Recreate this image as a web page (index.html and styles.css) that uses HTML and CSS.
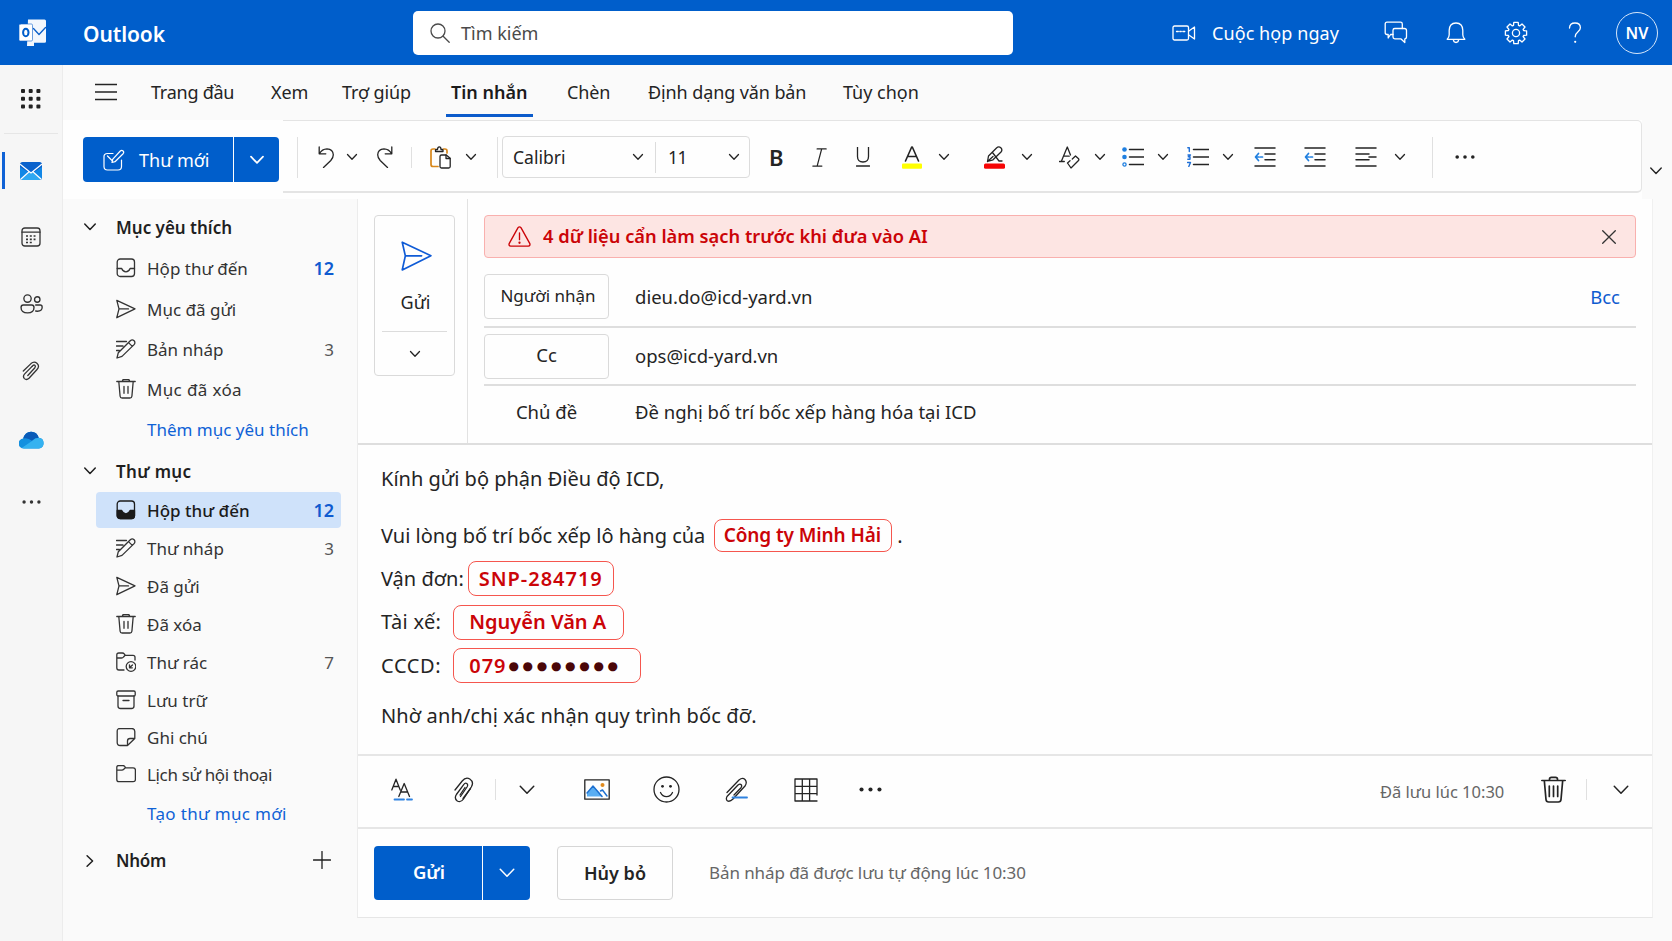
FILE: index.html
```html
<!DOCTYPE html>
<html lang="vi">
<head>
<meta charset="utf-8">
<title>Outlook</title>
<link rel="stylesheet" href="styles.css">
</head>
<body>
<svg class="sprite" aria-hidden="true">
  <symbol id="chev" viewBox="0 0 12 12"><path d="M1.5 3.500 6 8.200l4.500-4.700"/></symbol>
  <symbol id="dots" viewBox="0 0 20 6"><g fill="currentColor" stroke="none"><circle cx="2.200" cy="3" r="1.800"/><circle cx="10" cy="3" r="1.800"/><circle cx="17.800" cy="3" r="1.800"/></g></symbol>
  <symbol id="send" viewBox="0 0 20 20"><path d="M.8 1.300 19 9.800.8 18.700 3 9.900zM3 9.900h9.500"/></symbol>
  <symbol id="draft" viewBox="0 0 20 20"><path d="M.5 2.500h10M.5 7h6.500M.5 11.500h3M1 19l1.300-5.300L14.300 1.800a2.600 2.600 0 0 1 3.800 3.800L6 17.400zM12.500 3.600l3.800 3.800"/></symbol>
  <symbol id="trash" viewBox="0 0 20 20"><path d="M.8 2.500h18.400M6.500 2.500V1.800Q6.500.5 8 .5h4q1.500 0 1.500 1.300v.7M2.800 2.500l1.300 14.700q.2 1.800 2 1.800h7.800q1.800 0 2-1.800L17.200 2.500M8 7.500v6.800M12 7.500v6.800"/></symbol>
  <symbol id="inbox" viewBox="0 0 20 20"><rect x="1.200" y="1" width="17.300" height="17.500" rx="3"/><path d="M1.200 10.500h4.500q1.300 3.300 4.200 3.300t4.200-3.300h4.400"/></symbol>
  <symbol id="inbox-fill" viewBox="0 0 20 20"><rect x="1.200" y="1" width="17.300" height="17.500" rx="3"/><path fill="currentColor" d="M1.200 10.500h4.500q1.300 3.300 4.200 3.300t4.200-3.300h4.400v5q0 3-3 3H4.200q-3 0-3-3z"/></symbol>
</svg>

<header class="topbar">
  <svg class="logo" viewBox="0 0 27 27"><path fill="#fff" d="M9 .5h16.500q1.500 0 1.500 1.500v20.500q0 1.200-1.500 1.200H15V27H8z" opacity=".95"/><path d="M14.500 9.500l5.500 6 6.500-7" fill="none" stroke="#0a5fc9" stroke-width="1.300"/><rect x="0" y="5" width="13.500" height="17" rx="1.200" fill="#fff" stroke="#0a5fc9" stroke-width=".6"/><ellipse cx="6.800" cy="13.500" rx="2.700" ry="3.700" fill="none" stroke="#005ecb" stroke-width="2"/></svg>
  <span class="brand">Outlook</span>
  <div class="search">
    <svg class="i20" viewBox="0 0 20 20"><circle cx="8" cy="8" r="7"/><path d="m13.200 13.200 6 6"/></svg>
    <span>Tìm kiếm</span>
  </div>
  <div class="top-actions">
    <svg class="meet" viewBox="0 0 24 16"><rect x="1" y="1" width="15.500" height="14" rx="1.500"/><path d="M16.500 6.200 22.500 2v12l-6-4.200M4.500 6.500h1.800M7.800 6.500h1.500M10.800 6.500h2"/></svg>
    <span class="meet-label">Cuộc họp ngay</span>
    <svg class="chat" viewBox="0 0 24 23"><path d="M9 13.500H6.500L4.200 17v-3.500H3q-1.800 0-1.800-1.800V3q0-1.800 1.800-1.800h13.500q1.800 0 1.800 1.800v4.500"/><path d="M10.800 7.500h9.500q2.200 0 2.200 2v6.300q0 2-1.700 2V21.500l-4-3.700h-6q-1.800 0-1.800-1.800V9.300q0-1.800 1.800-1.800z"/></svg>
    <svg class="bell" viewBox="0 0 20 22"><path d="M1.200 17.300q2-2 2-4.500V8.300Q3.200 1 10 1t6.800 7.300v4.500q0 2.500 2 4.500zM7.300 17.500q.3 3 2.700 3t2.700-3"/></svg>
    <svg class="gear" viewBox="0 0 24 24"><path d="M9.800 1.400 14.200 1.400 14.500 4.400 15.600 4.900 18 3 21 6 19.100 8.400 19.600 9.500 22.600 9.800V14.200L19.600 14.500 19.100 15.600 21 18 18 21 15.600 19.100 14.500 19.600 14.200 22.600H9.800L9.500 19.600 8.400 19.100 6 21 3 18 4.900 15.600 4.400 14.500 1.400 14.200V9.800L4.400 9.500 4.900 8.400 3 6 6 3 8.400 4.900 9.500 4.400z"/><circle cx="12" cy="12" r="3.600"/></svg>
    <svg class="help" viewBox="0 0 14 22"><path d="M1.500 6Q1.700 1 7 1t5.400 4.800Q12.400 8 9.800 10 7.200 12 7.200 14.800"/><circle cx="7.200" cy="19.800" r="1.100" fill="currentColor" stroke="none"/></svg>
    <span class="avatar">NV</span>
  </div>
</header>

<div class="app">
  <nav class="rail">
    <svg class="waffle" viewBox="0 0 20 20"><g fill="#222" stroke="none"><rect x="0" y="0" width="4" height="4" rx="1"/><rect x="7.700" y="0" width="4" height="4" rx="1"/><rect x="15.400" y="0" width="4" height="4" rx="1"/><rect x="0" y="7.700" width="4" height="4" rx="1"/><rect x="7.700" y="7.700" width="4" height="4" rx="1"/><rect x="15.400" y="7.700" width="4" height="4" rx="1"/><rect x="0" y="15.400" width="4" height="4" rx="1"/><rect x="7.700" y="15.400" width="4" height="4" rx="1"/><rect x="15.400" y="15.400" width="4" height="4" rx="1"/></g></svg>
    <div class="rail-line"></div>
    <div class="rail-mail">
      <svg class="mail" viewBox="0 0 22 18"><rect width="22" height="18" rx="2.500" fill="#0a62cc"/><path d="M0 5l8 5-7 7.500Q0 17 0 15.500z" fill="#1187e6"/><path d="M22 5l-8 5 7 7.500q1-.5 1-2z" fill="#1187e6"/><path d="M1 17.300 9 10h4l8 7.300q-.5.700-1.500.7h-17q-1 0-1.500-.7z" fill="#2fa8f2"/><path d="M.5 2.500 11 11 21.500 2.500M1 17l7.800-7M21 17l-7.800-7" fill="none" stroke="#fff" stroke-width="1.200"/></svg>
    </div>
    <svg class="cal" viewBox="0 0 20 20"><rect x="1" y="1" width="18" height="18" rx="2.800"/><path d="M1 5.200h18"/><path stroke-linecap="butt" stroke-dasharray="2 1.800" stroke-width="1.700" d="M5 9h9.500M5 12.300h9.500M5 15.500h6"/></svg>
    <svg class="people" viewBox="0 0 22 19"><circle cx="7.200" cy="4.300" r="3.500"/><circle cx="16.500" cy="5.200" r="2.600"/><path d="M3.200 10.500h8q2.200 0 2.200 2.300 0 5.200-6.200 5.200T1 12.800q0-2.300 2.200-2.300zM15 10.500h4.300q1.900 0 1.900 2 0 4-4.700 3.900l-1.500-.2"/></svg>
    <svg class="clip" viewBox="0 0 18 20"><path d="M1.300 10 9 2.600q3-2.700 5.900-.4 3.300 3-.1 6.500L7 17.300q-2.500 2.300-4.600.3-2-2.300.3-4.700l7.400-7.500"/><path d="M5.800 14.500 12.700 7q1.300-1.800.2-2.700-1.300-.9-2.800 1"/></svg>
    <svg class="cloud" viewBox="0 0 25 18"><path d="M5 17.500a5 5 0 0 1-.8-10Q6 1 12 .8t7.800 6a5.400 5.400 0 0 1 .2 10.700z" fill="#1490df"/><path d="M4.200 7.500Q6 1 12 .8t7.800 6Q16 6.800 13 9.800 9 6.500 4.200 7.500z" fill="#0a5bb8"/><path d="M3 16.800 13 10q3-3.200 6.800-3.200a5.400 5.400 0 0 1 .2 10.700H5z" fill="#35b2f0"/></svg>
    <svg class="rail-dots"><use href="#dots"/></svg>
  </nav>

  <div class="main">
    <nav class="tabs">
      <svg class="burger" viewBox="0 0 22 18"><path d="M0 1.500h22M0 9h22M0 16.500h22"/></svg>
      <a class="tab t1">Trang đầu</a>
      <a class="tab t2">Xem</a>
      <a class="tab t3">Trợ giúp</a>
      <a class="tab t4 on">Tin nhắn</a>
      <a class="tab t5">Chèn</a>
      <a class="tab t6">Định dạng văn bản</a>
      <a class="tab t7">Tùy chọn</a>
    </nav>

    <div class="ribbon">
      <div class="new-mail">
        <span class="new-main">
          <svg class="compose-ico" viewBox="0 0 22 22"><path d="M10 4.500H4.500Q1 4.500 1 7.500v10Q1 21 4.500 21H15q3.500 0 3.500-3.500V11"/><path d="m9 13.500.8-3.300L17.300 2q1.400-1.300 2.800 0 1.200 1.300 0 2.700L12 12.700zM4.500 7l5 5"/></svg>
          <span>Thư mới</span>
        </span>
        <span class="new-drop"><svg class="c16"><use href="#chev"/></svg></span>
      </div>
      <div class="tools">
        <i class="vsep s1"></i>
        <svg class="undo" viewBox="0 0 17 22"><path d="M1.200 1v6.800h6.600M1.500 7.500Q4 3 9 2.800q6 .2 6.300 6 0 3-2.500 5.700L5.500 21.500"/></svg>
        <svg class="c12 m11"><use href="#chev"/></svg>
        <svg class="redo" viewBox="0 0 17 22"><path d="M15.800 1v6.800H9.200M15.500 7.500Q13 3 8 2.800q-6 .2-6.300 6 0 3 2.500 5.700l7.300 7"/></svg>
        <i class="vsep short"></i>
        <svg class="paste" viewBox="0 0 21 23"><path stroke="#d8871a" stroke-width="1.700" d="M5 3H3Q1 3 1 5v13.500q0 2 2 2h5M13.500 3h1.500q2 0 2 2v2"/><path d="M5.500 5.500V4.300q0-.8.8-.8h1.200Q7.700.8 9.300.8T11 3.500h1.200q.8 0 .8.800v1.200z"/><path fill="#fff" d="M11.500 9h4.700l4 3.300v8.200q0 1.500-1.500 1.500h-7.200q-1.500 0-1.500-1.500v-10q0-1.500 1.500-1.500z"/><path d="M16 9v3.500h4"/></svg>
        <svg class="c12 m14"><use href="#chev"/></svg>
        <i class="vsep s2"></i>
        <div class="fontbox">
          <span class="fname">Calibri</span>
          <svg class="c12"><use href="#chev"/></svg>
          <span class="fsize">11</span>
          <svg class="c12"><use href="#chev"/></svg>
        </div>
        <b class="tb-b">B</b>
        <svg class="tb-i" viewBox="0 0 15 20"><path d="M5 1h9.500M.5 19H10M9.800 1 5 19"/></svg>
        <svg class="tb-u" viewBox="0 0 14 20"><path d="M1.500 0v9.500q0 5.500 5.500 5.500t5.500-5.500V0M.5 19h13"/></svg>
        <svg class="tb-a" viewBox="0 0 22 23"><path d="m4.500 15 6.200-14h.6l6.200 14M6.800 10.500h8.400" stroke-width="1.600"/><rect x="1" y="17.500" width="20" height="5.200" rx="1" fill="#ff0" stroke="none"/></svg>
        <svg class="c12 m15"><use href="#chev"/></svg>
        <svg class="tb-hl" viewBox="0 0 23 23"><rect x="1" y="17.500" width="21" height="5.200" rx="1.500" fill="#f60505" stroke="none"/><path d="M4.500 15.500 5.500 10 13.500 2q2.200-2 4.300-.2 2 2 .2 4.200L10 13.800zM9.500 6.500l6.500 8.500M16 15h3M4.500 15.500l5.500-5"/></svg>
        <svg class="c12 m15"><use href="#chev"/></svg>
        <svg class="tb-clr" viewBox="0 0 21 23"><path d="M2.500 15 8.300 1l3.200 8M4.500 10.200h5.700M.5 15.500h4.800"/><path d="m8.500 17 2.500-2.200M8.500 17l3.500 5 7.500-7.500q.8-1-.2-2L16.500 10l-3.200 3"/></svg>
        <svg class="c12 m14"><use href="#chev"/></svg>
        <svg class="list m16" viewBox="0 0 22 20"><g fill="#1f7fe0" stroke="none"><circle cx="2.500" cy="2.500" r="2.300"/><circle cx="2.500" cy="10" r="2.300"/></g><circle cx="2.500" cy="17.500" r="1.600" stroke="#1f7fe0"/><path stroke-width="1.500" d="M7.500 2.500H22M7.500 10H22M7.500 17.500H22"/></svg>
        <svg class="c12 m13"><use href="#chev"/></svg>
        <svg class="list m18" viewBox="0 0 22 20"><path stroke="#1f6fd6" stroke-width="1.400" d="M.8.800h1.500v3.700M1 8h2.500L1.300 9.800H3v2.400H.8M.5 15.500h3L1.800 19.500"/><path stroke-width="1.500" d="M6.500 2.500H22M6.500 10H22M6.500 17.500H22"/></svg>
        <svg class="c12 m13"><use href="#chev"/></svg>
        <svg class="list m20" viewBox="0 0 22 20"><path stroke-width="1.500" d="M1 1h20M11 7h10M11 12.800h10M1 19h20"/><path stroke="#1f7fe0" stroke-width="1.700" d="M4.500 6.500 1.500 10l3 3.500M2 10h3M6.500 10h2"/></svg>
        <svg class="list m28" viewBox="0 0 22 20"><path stroke-width="1.500" d="M1 1h20M11 7h10M11 12.800h10M1 19h20"/><path stroke="#1f7fe0" stroke-width="1.700" d="M4.500 6.500 1.500 10l3 3.500M2 10h3M6.500 10h2"/></svg>
        <svg class="list m28" viewBox="0 0 22 20"><path stroke-width="1.500" d="M1 1h20M1 7h13M14 10h7M1 12.800h13M1 19h20"/></svg>
        <svg class="c12 m17"><use href="#chev"/></svg>
        <i class="vsep s3"></i>
        <svg class="tb-dots"><use href="#dots"/></svg>
      </div>
      <svg class="collapse"><use href="#chev"/></svg>
    </div>

    <div class="work">
      <aside class="folders">
        <div class="group g1"><svg class="c14"><use href="#chev"/></svg><span>Mục yêu thích</span></div>
        <div class="row r42"><svg class="fi"><use href="#inbox"/></svg><span>Hộp thư đến</span><b class="n">12</b></div>
        <div class="row r40"><svg class="fi"><use href="#send"/></svg><span>Mục đã gửi</span></div>
        <div class="row r40"><svg class="fi"><use href="#draft"/></svg><span>Bản nháp</span><i class="n">3</i></div>
        <div class="row r40"><svg class="fi"><use href="#trash"/></svg><span class="wide">Mục đã xóa</span></div>
        <div class="row r41 link"><span>Thêm mục yêu thích</span></div>
        <div class="group g2"><svg class="c14"><use href="#chev"/></svg><span class="wide">Thư mục</span></div>
        <div class="row sel"><svg class="fi"><use href="#inbox-fill"/></svg><span>Hộp thư đến</span><b class="n">12</b></div>
        <div class="row r38"><svg class="fi"><use href="#draft"/></svg><span>Thư nháp</span><i class="n">3</i></div>
        <div class="row r38"><svg class="fi"><use href="#send"/></svg><span>Đã gửi</span></div>
        <div class="row r38"><svg class="fi"><use href="#trash"/></svg><span>Đã xóa</span></div>
        <div class="row r38"><svg class="fi" viewBox="0 0 20 20"><path d="M8 18H3Q.8 18 .8 15.800V3q0-2 2-2h3.500q1.300 0 2 1l1 1.300H17q2 0 2 2V8M.8 6h4.700q1.300 0 2-1l1.600-1.700"/><circle cx="15" cy="14.500" r="4.800"/><path d="M13.500 12.800v3H16.300M13.700 15.600l2.800-2.600"/></svg><span>Thư rác</span><i class="n">7</i></div>
        <div class="row r38"><svg class="fi" viewBox="0 0 20 20"><rect x=".8" y="1" width="18.400" height="5" rx="1.300"/><path d="M2 6v10q0 2.500 2.500 2.500h11Q18 18.500 18 16V6M7 10.500h6"/></svg><span>Lưu trữ</span></div>
        <div class="row r37"><svg class="fi" viewBox="0 0 20 20"><path d="M11.500 17.500H4.200q-3 0-3-3V3q0-2.500 3-2.500h11.600q3 0 3 3V10.500zM11.500 17.500V13q0-2.500 2.500-2.500h4.800"/></svg><span>Ghi chú</span></div>
        <div class="row r37"><svg class="fi" viewBox="0 0 20 20"><path d="M.8 14.500V2.500q0-2 2-2h4q1.300 0 2 1l.8 1.300H17.200q2.200 0 2.200 2.200v9.500q0 2.200-2.200 2.200H3Q.8 16.700.8 14.500zM.8 5.200h5q1.300 0 2-1l1.500-1.400"/></svg><span class="tight">Lịch sử hội thoại</span></div>
        <div class="row link r40"><span class="wide">Tạo thư mục mới</span></div>
        <div class="group g3"><svg class="c14 right"><use href="#chev"/></svg><span class="tight">Nhóm</span><svg class="plus" viewBox="0 0 18 18"><path d="M9 .5v17M.5 9h17"/></svg></div>
      </aside>

      <section class="mailpane">
        <div class="head">
          <div class="sendcol">
            <div class="sendbox">
              <svg class="bigsend" viewBox="0 0 20 20" preserveAspectRatio="none"><path d="M.8.800 19.300 9.800.8 19.300 2.800 9.900zM2.800 9.900h10.500"/></svg>
              <span class="sendlabel">Gửi</span>
              <div class="senddrop"><svg class="c12"><use href="#chev"/></svg></div>
            </div>
          </div>
          <div class="fields">
            <div class="alert">
              <svg class="tri" viewBox="0 0 22 20"><path d="M9.600 1.500q1.400-1.500 2.800 0l8.500 15.300q.6 2.200-1.500 2.400H2.600Q.5 19 1.100 16.800zM11 6.500v6.500"/><circle cx="11" cy="16" r="1.100" fill="currentColor" stroke="none"/></svg>
              <span>4 dữ liệu cẩn làm sạch trước khi đưa vào AI</span>
              <svg class="x" viewBox="0 0 14 14"><path d="m.7.700 12.600 12.600M13.300.7.700 13.300"/></svg>
            </div>
            <div class="field f1"><span class="fbtn small">Người nhận</span><span class="fval">dieu.do@icd-yard.vn</span><span class="bcc">Bcc</span></div>
            <div class="field f2"><span class="fbtn">Cc</span><span class="fval">ops@icd-yard.vn</span></div>
            <div class="field f3"><span class="flabel">Chủ đề</span><span class="fval">Đề nghị bố trí bốc xếp hàng hóa tại ICD</span></div>
          </div>
        </div>

        <div class="body">
          <p class="p1">Kính gửi bộ phận Điều độ ICD,</p>
          <p class="line p2"><span>Vui lòng bố trí bốc xếp lô hàng của</span><span class="pill k1">Công ty Minh Hải</span><span class="stop">.</span></p>
          <p class="line"><span>Vận đơn:</span><span class="pill k2">SNP-284719</span></p>
          <p class="line"><span class="key">Tài xế:</span><span class="pill k3">Nguyễn Văn A</span></p>
          <p class="line"><span class="key cccd">CCCD:</span><span class="pill k4"><span>079</span><span class="mask">●●●●●●●●</span></span></p>
          <p class="p6">Nhờ anh/chị xác nhận quy trình bốc đỡ.</p>
        </div>

        <div class="editbar">
          <svg class="e-aa" viewBox="0 0 22 23"><path d="M.8 12 5 1.200 9.200 12M2.300 8.500h5.500M7.800 18.500l5.400-13 5.300 13M9.800 14h6.800"/><path stroke="#2f82e0" stroke-width="1.800" d="M3.500 21.500h9.500M16 21.500h5"/></svg>
          <svg class="e-clip" viewBox="0 0 20 26"><path d="M1 13 8.200 4q3.600-4.500 7.600-2 4.500 3 1.500 8L9.500 22q-2.800 4-6.200 2-3.400-2.500-.9-6.500L9.500 7.800q1.700-2.300 3.300-1.300 1.600 1.300.2 3.500L6.500 19.500"/><path d="M16.500 11.500 9 21.500M6 18l5-7.500"/></svg>
          <i class="vsep e-sep"></i>
          <svg class="c18 e-c"><use href="#chev"/></svg>
          <svg class="e-img" viewBox="0 0 26 21"><rect x=".8" y=".8" width="24.400" height="19.400"/><path fill="#5aaef2" stroke="none" d="M3 17.500V14l6-7 10 10.500z"/><path stroke="#1c6fd0" stroke-width="1.400" d="M3 14l6-7 9 10.500M16.500 12l2-1 4.500 6"/><circle cx="18.500" cy="6" r="2" fill="#e08a1e" stroke="none"/></svg>
          <svg class="e-smile" viewBox="0 0 27 27"><circle cx="13.500" cy="13.500" r="12.500"/><path d="M7.500 16.500q2 4.200 6 4.200t6-4.200"/><g fill="currentColor" stroke="none"><circle cx="9.500" cy="10.300" r="1.400"/><circle cx="17.500" cy="10.300" r="1.400"/></g></svg>
          <svg class="e-pen" viewBox="0 0 23 26"><path d="M2 15.500 14 3q3.500-3 6-.5 2.500 3 0 6.500L8 22q-3 3-5.500 2-2-1.500-.5-4.500L13 8q2-1.500 3.200-.3 1 1.300-.2 3L9 18"/><path stroke="#2f82e0" stroke-width="1.800" d="M7.500 20.500H22"/></svg>
          <svg class="e-table" viewBox="0 0 24 24"><path d="M23 17V1H1v22h22M1 8.300h22M1 15.600h22M8.300 1v22M15.600 1v22"/></svg>
          <svg class="e-dots"><use href="#dots"/></svg>
          <span class="saved">Đã lưu lúc 10:30</span>
          <svg class="e-trash" viewBox="0 0 25 27"><path d="M.8 4.500h23.400M8.500 4.500v-1.200q0-2 2-2h4q2 0 2 2v1.200M3.300 4.500 5 23.500q.2 2.500 2.700 2.500h9.600q2.500 0 2.700-2.500L21.700 4.500M8.300 10v10.500M12.500 10v10.500M16.700 10v10.500"/></svg>
          <i class="vsep e-sep2"></i>
          <svg class="c18 e-c2"><use href="#chev"/></svg>
        </div>

        <div class="foot">
          <span class="f-send">Gửi</span><span class="f-drop"><svg class="c18"><use href="#chev"/></svg></span>
          <span class="f-cancel">Hủy bỏ</span>
          <span class="f-note">Bản nháp đã được lưu tự động lúc 10:30</span>
        </div>
      </section>
    </div>
  </div>
</div>
</body>
</html>
```

FILE: styles.css
```css
* { box-sizing: border-box; }
body {
  margin: 0;
  width: 1672px;
  height: 941px;
  overflow: hidden;
  display: flex;
  flex-direction: column;
  background: #fafafa;
  color: #242424;
  font-family: "Noto Sans", "Open Sans", sans-serif;
  font-size: 17px;
  line-height: 1;
  white-space: nowrap;
}
svg { display: block; flex: none; fill: none; stroke: currentColor; stroke-width: 1.3; stroke-linecap: round; stroke-linejoin: round; }
i { font-style: normal; }
p { margin: 0; }
.sprite { position: absolute; width: 0; height: 0; }
.c12 { width: 12px; height: 12px; }
.c14 { width: 14px; height: 14px; }
.c16 { width: 16px; height: 16px; }
.c18 { width: 18px; height: 18px; stroke-width: 1; }

/* Top bar */
.topbar { height: 65px; flex: none; background: #005ecb; color: #fff; display: flex; align-items: center; }
.logo { width: 27px; height: 27px; margin-left: 19px; stroke: none; }
.brand { margin-left: 37px; width: 330px; padding-top: 3px; font-size: 21px; font-weight: 600; letter-spacing: -.1px; }
.search { width: 600px; height: 44px; background: #fff; border-radius: 5px; color: #4a4a4a; display: flex; align-items: center; padding-left: 17px; font-size: 18px; }
.search span { margin-left: 11px; }
.i20 { width: 20px; height: 20px; }
.top-actions { display: flex; align-items: center; margin-left: 159px; font-size: 18px; }
.meet { width: 24px; height: 16px; }
.meet-label { margin-left: 16px; width: 127px; letter-spacing: .08px; }
.chat { width: 24px; height: 23px; margin-left: 45px; }
.bell { width: 20px; height: 22px; margin-left: 38px; }
.gear { width: 24px; height: 24px; margin-left: 38px; }
.help { width: 14px; height: 22px; margin-left: 40px; }
.avatar { width: 42px; height: 42px; margin-left: 34px; border: 1.5px solid #d5e6fa; border-radius: 50%; display: flex; align-items: center; justify-content: center; padding-top: 1px; font-size: 16px; font-weight: 600; }

/* Shell */
.app { display: flex; flex: 1; min-height: 0; }
.rail { width: 63px; background: #f6f6f6; border-right: 1px solid #ececec; display: flex; flex-direction: column; align-items: center; color: #333; }
.waffle { width: 20px; height: 20px; margin-top: 24px; }
.rail-line { width: 54px; height: 1px; background: #e6e6e6; margin-top: 24px; }
.rail-mail { align-self: stretch; height: 37px; margin-top: 18px; border-left: 3px solid #0f62d6; margin-left: 2px; display: flex; align-items: center; }
.mail { width: 22px; height: 18px; margin-left: 15px; stroke: none; }
.cal { width: 20px; height: 20px; margin-top: 38px; }
.people { width: 23px; height: 20px; margin-top: 47px; }
.clip { width: 18px; height: 20px; margin-top: 47px; }
.cloud { width: 25px; height: 18px; margin-top: 50px; stroke: none; }
.rail-dots { width: 19px; height: 6px; margin-top: 50px; }
.main { flex: 1; display: flex; flex-direction: column; }

/* Tabs */
.tabs { height: 55px; background: #fafafa; display: flex; align-items: flex-start; font-size: 18px; }
.burger { width: 22px; height: 18px; margin: 18px 0 0 32px; }
.tab { height: 52px; padding-top: 18px; border-bottom: 3px solid transparent; letter-spacing: -.1px; }
.t1 { margin-left: 34px; width: 83px; letter-spacing: -.25px; }
.t2 { margin-left: 37px; width: 37px; }
.t3 { margin-left: 34px; width: 69px; }
.t4 { margin-left: 35px; width: 87px; padding-left: 5px; letter-spacing: 0; }
.t5 { margin-left: 34px; width: 43px; }
.t6 { margin-left: 38px; width: 158px; }
.t7 { margin-left: 37px; width: 76px; letter-spacing: 0; }
.on { font-weight: 600; color: #1b1b1b; border-bottom-color: #0b5bcb; }

/* Ribbon */
.ribbon { height: 79px; background: linear-gradient(90deg, #fefefe 1579px, #fafafa 1579px); display: flex; align-items: flex-start; }
.new-mail { margin: 17px 4px 0 20px; display: flex; gap: 1px; color: #fff; }
.new-main { width: 150px; height: 45px; background: #005ecb; border-radius: 4px 0 0 4px; display: flex; align-items: center; padding-left: 20px; font-size: 18px; }
.new-main span { margin-left: 14px; }
.compose-ico { width: 22px; height: 22px; stroke-width: 1.2; }
.new-drop { width: 45px; background: #005ecb; border-radius: 0 4px 4px 0; display: flex; align-items: center; justify-content: center; }
.tools { width: 1359px; height: 73px; border: solid #e4e4e4; border-width: 1px 1px 2px 0; border-radius: 0 5px 5px 0; display: flex; align-items: center; padding-top: 2px; }
.vsep { width: 1px; height: 41px; background: #e0e0e0; flex: none; }
.s1 { margin-left: 14px; }
.s2 { margin-left: 20px; }
.s3 { margin-left: 26px; }
.short { height: 21px; margin-left: 18px; }
.m11 { margin-left: 11px; }
.m13 { margin-left: 13px; }
.m14 { margin-left: 14px; }
.m15 { margin-left: 15px; }
.m16 { margin-left: 16px; }
.m17 { margin-left: 17px; }
.m18 { margin-left: 18px; }
.m20 { margin-left: 20px; }
.m28 { margin-left: 28.5px; }
.undo { width: 17px; height: 22px; margin-left: 20px; }
.redo { width: 17px; height: 22px; margin-left: 18px; }
.paste { width: 21px; height: 23px; margin-left: 18px; }
.fontbox { width: 248px; height: 42px; margin-left: 4px; border: 1px solid #dcdcdc; border-radius: 4px; display: flex; align-items: center; font-size: 17.5px; }
.fname { width: 129px; padding-left: 10px; padding-top: 1px; }
.fsize { width: 73px; height: 31px; padding: 1px 0 0 12px; margin-left: 11px; border-left: 1px solid #dcdcdc; display: flex; align-items: center; letter-spacing: -.6px; }
.tb-b { width: 14px; margin-left: 19px; font-size: 22px; font-weight: 600; }
.tb-i { width: 15px; height: 19px; margin-left: 29px; }
.tb-u { width: 14px; height: 20px; margin-left: 29px; }
.tb-a { width: 22px; height: 23px; margin-left: 31px; }
.tb-hl { width: 23px; height: 23px; margin-left: 33px; }
.tb-clr { width: 21px; height: 23px; margin-left: 25.5px; }
.list { width: 22px; height: 20px; }
.tb-dots { width: 22px; height: 6px; margin-left: 21px; }
.collapse { width: 14px; height: 14px; margin: 44px 0 0 7px; stroke-width: 1.2; }

/* Folder list */
.work { display: flex; flex: 1; }
.folders { width: 294px; padding-top: 8px; color: #333; }
.group { display: flex; align-items: center; padding-left: 20px; font-weight: 600; color: #1f1f1f; }
.group span { margin-left: 19px; }
.g1 { height: 40px; }
.g2 { height: 42px; }
.g3 { height: 55px; }
.right { transform: rotate(-90deg); }
.plus { width: 18px; height: 18px; margin: 0 26px 2px auto; }
.row { display: flex; align-items: center; padding: 0 7px 0 20px; margin: 0 16px 0 33px; }
.row .wide, .group .wide { letter-spacing: .35px; }
.row .tight { letter-spacing: -.34px; }
.group .tight { letter-spacing: -.3px; }
.fi { width: 20px; height: 20px; margin-right: 11px; }
.n { margin-left: auto; }
.row b { color: #0f5bd0; font-size: 18px; font-weight: 600; }
.row i { color: #555; }
.r42 { height: 42px; }
.r40 { height: 40px; }
.r41 { height: 41px; }
.r38 { height: 38px; }
.r37 { height: 37px; }
.row.link { padding-left: 51px; color: #0f62d6; }
.sel { height: 36px; background: #cfe2fa; border-radius: 4px; color: #1b1b1b; font-weight: 500; margin-bottom: 1px; }

/* Message pane */
.mailpane { width: 1296px; height: 719px; background: #fefefe; border-left: 1px solid #ececec; border-right: 1px solid #f0f0f0; border-bottom: 1px solid #e6e6e6; font-size: 18.5px; }
.head { height: 246px; border-bottom: 2px solid #dedede; display: flex; }
.sendcol { width: 110px; border-right: 1px solid #e2e2e2; padding: 16px 0 0 16px; }
.sendbox { width: 81px; height: 161px; border: 1px solid #dadada; border-radius: 4px; display: flex; flex-direction: column; align-items: center; }
.bigsend { width: 31px; height: 30px; margin: 25px 0 0 3px; color: #0f5bd6; stroke-width: 1.1; }
.sendlabel { margin: 22px 0 0 2px; font-size: 18px; }
.senddrop { width: 65px; border-top: 1px solid #dcdcdc; margin-top: 20px; padding-top: 16px; display: flex; justify-content: center; }
.fields { flex: 1; padding: 16px 16px 0 16px; }
.alert { height: 43px; border: 1px solid #f9b0ae; border-radius: 4px; background: #fde5e3; display: flex; align-items: center; padding: 0 19px 0 23px; color: #cb0408; font-size: 18.3px; font-weight: 600; }
.alert span { margin-left: 12px; }
.tri { width: 23px; height: 21px; }
.x { width: 14px; height: 14px; margin-left: auto; color: #333; }
.field { display: flex; align-items: center; }
.f1 { height: 70px; padding-top: 8px; border-bottom: 2px solid #dedede; }
.f1 .fval, .f1 .bcc { padding-top: 2px; }
.f2 { height: 58px; border-bottom: 2px solid #dedede; }
.f3 { height: 53px; }
.fbtn, .flabel { width: 125px; height: 45px; display: flex; align-items: center; justify-content: center; padding-bottom: 2px; }
.flabel { padding-bottom: 0; }
.fbtn { border: 1px solid #dadada; border-radius: 4px; }
.small { font-size: 17px; padding-left: 3px; }
.fval { margin-left: 26px; }
.bcc { margin-left: auto; margin-right: 16px; color: #0f5bd0; }
.body { height: 309px; padding: 14px 0 0 23px; font-size: 20px; }
.body p { display: flex; align-items: center; }
.body .p1 { height: 40px; }
.body .line { height: 43.3px; }
.body .p2 { margin-top: 15px; }
.body .p6 { height: 58px; letter-spacing: .13px; }
.key { letter-spacing: .3px; }
.cccd { letter-spacing: .65px; }
.pill { height: 35px; border: 1.5px solid #f5564e; border-radius: 8px; color: #cb0408; font-weight: 600; display: flex; align-items: center; justify-content: center; }
.k1 { width: 178px; height: 33px; margin-left: 9px; padding-right: 2px; font-size: 19px; letter-spacing: -.1px; }
.k2 { width: 146px; margin-left: 4px; letter-spacing: .98px; }
.k3 { width: 171px; margin-left: 12px; padding-right: 2px; }
.k4 { width: 188px; margin-left: 12px; justify-content: flex-start; padding-left: 15px; letter-spacing: .9px; }
.mask { margin-left: 2px; font-family: "DejaVu Sans", sans-serif; font-size: 12px; letter-spacing: 3.7px; color: #4a0608; }
.stop { margin-left: 5px; }
.editbar { height: 75px; border-top: 2px solid #e6e6e6; border-bottom: 2px solid #e6e6e6; display: flex; align-items: center; padding-bottom: 4px; }
.e-aa { width: 22px; height: 23px; margin-left: 33px; }
.e-clip { width: 20px; height: 26px; margin-left: 41px; }
.vsep.e-sep, .vsep.e-sep2 { height: 21px; }
.e-sep { margin-left: 21px; }
.e-c { margin-left: 22px; }
.e-img { width: 26px; height: 21px; margin-left: 48px; }
.e-smile { width: 27px; height: 27px; margin-left: 43px; }
.e-pen { width: 23px; height: 26px; margin-left: 45px; }
.e-table { width: 24px; height: 24px; margin-left: 46px; }
.e-dots { width: 23px; height: 7px; margin-left: 41px; }
.saved { margin-left: auto; width: 124px; padding-top: 6px; color: #666; font-size: 16.5px; }
.e-trash { width: 25px; height: 27px; margin-left: 37px; stroke-width: 1.7; }
.e-sep2 { margin-left: 20px; }
.e-c2 { margin-left: 25px; margin-right: 22px; }
.foot { height: 87px; display: flex; align-items: center; padding-left: 16px; font-weight: 600; }
.f-send, .f-drop { height: 54px; background: #005ecb; color: #fff; display: flex; align-items: center; justify-content: center; }
.f-send { width: 108px; border-radius: 4px 0 0 4px; margin-right: 1px; padding-left: 2px; }
.f-drop { width: 47px; border-radius: 0 4px 4px 0; }
.f-cancel { width: 116px; height: 54px; margin-left: 27px; border: 1px solid #d6d6d6; border-radius: 4px; display: flex; align-items: center; justify-content: center; font-size: 18px; }
.f-note { margin-left: 36px; font-size: 17px; letter-spacing: -.09px; font-weight: 400; color: #666; }
```
